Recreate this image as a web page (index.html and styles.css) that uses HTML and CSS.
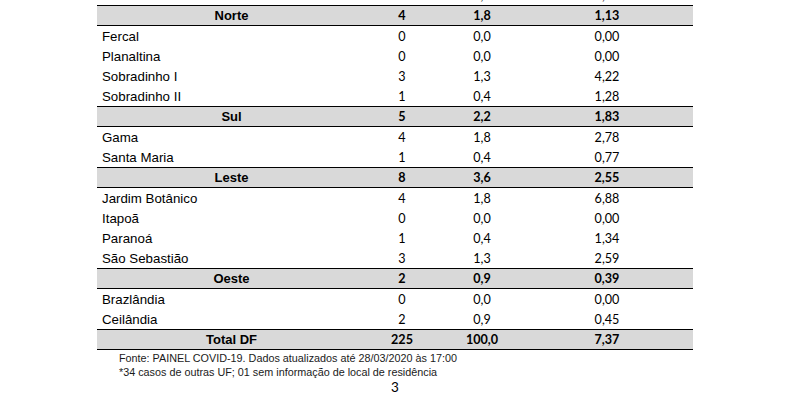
FILE: index.html
```html
<!DOCTYPE html>
<html lang="pt-BR">
<head>
<meta charset="utf-8">
<title>Casos por região</title>
<link rel="stylesheet" href="styles.css">
</head>
<body>
<div class="page">
  <div class="table">
    <div class="row cut"><span class="name"></span><span class="n">2</span><span class="n">0,9</span><span class="n c4">0,90</span></div>
    <div class="row head"><span class="name">Norte</span><span class="n">4</span><span class="n">1,8</span><span class="n c4">1,13</span></div>
    <div class="row"><span class="name">Fercal</span><span class="n">0</span><span class="n">0,0</span><span class="n c4">0,00</span></div>
    <div class="row"><span class="name">Planaltina</span><span class="n">0</span><span class="n">0,0</span><span class="n c4">0,00</span></div>
    <div class="row"><span class="name">Sobradinho I</span><span class="n">3</span><span class="n">1,3</span><span class="n c4">4,22</span></div>
    <div class="row"><span class="name">Sobradinho II</span><span class="n">1</span><span class="n">0,4</span><span class="n c4">1,28</span></div>
    <div class="row head"><span class="name">Sul</span><span class="n">5</span><span class="n">2,2</span><span class="n c4">1,83</span></div>
    <div class="row"><span class="name">Gama</span><span class="n">4</span><span class="n">1,8</span><span class="n c4">2,78</span></div>
    <div class="row"><span class="name">Santa Maria</span><span class="n">1</span><span class="n">0,4</span><span class="n c4">0,77</span></div>
    <div class="row head"><span class="name">Leste</span><span class="n">8</span><span class="n">3,6</span><span class="n c4">2,55</span></div>
    <div class="row"><span class="name">Jardim Botânico</span><span class="n">4</span><span class="n">1,8</span><span class="n c4">6,88</span></div>
    <div class="row"><span class="name">Itapoã</span><span class="n">0</span><span class="n">0,0</span><span class="n c4">0,00</span></div>
    <div class="row"><span class="name">Paranoá</span><span class="n">1</span><span class="n">0,4</span><span class="n c4">1,34</span></div>
    <div class="row"><span class="name">São Sebastião</span><span class="n">3</span><span class="n">1,3</span><span class="n c4">2,59</span></div>
    <div class="row head"><span class="name">Oeste</span><span class="n">2</span><span class="n">0,9</span><span class="n c4">0,39</span></div>
    <div class="row"><span class="name">Brazlândia</span><span class="n">0</span><span class="n">0,0</span><span class="n c4">0,00</span></div>
    <div class="row"><span class="name">Ceilândia</span><span class="n">2</span><span class="n">0,9</span><span class="n c4">0,45</span></div>
    <div class="row head"><span class="name">Total DF</span><span class="n">225</span><span class="n">100,0</span><span class="n c4">7,37</span></div>
  </div>
  <div class="notes">
    <p>Fonte: PAINEL COVID-19. Dados atualizados até 28/03/2020 às 17:00</p>
    <p>*34 casos de outras UF; 01 sem informação de local de residência</p>
  </div>
  <div class="pagenum">3</div>
</div>
</body>
</html>
```
FILE: styles.css
```css
html, body {
  margin: 0;
  padding: 0;
  background: #ffffff;
}
.page {
  width: 792px;
  height: 406px;
  overflow: hidden;
  position: relative;
}
.table {
  margin-left: 97px;
  width: 596px;
  margin-top: -15px;
}
.row {
  display: grid;
  grid-template-columns: 269px 72px 88px 167px;
  align-items: center;
  height: 20px;
  box-sizing: border-box;
  color: #000;
}
.row.head {
  height: 21px;
  background: #d9d9d9;
  border-top: 1.5px solid #000;
  border-bottom: 1.5px solid #000;
}
.name {
  font-family: "Liberation Sans", Arial, sans-serif;
  font-size: 13.3px;
  padding-left: 5px;
  white-space: nowrap;
}
.head .name {
  font-weight: bold;
  text-align: center;
  padding-left: 0;
  font-size: 13px;
}
.n {
  font-family: Lato, "Open Sans", sans-serif;
  font-size: 12.6px;
  text-align: center;
}
.head .n {
  font-weight: bold;
}
.n.c4 {
  padding-right: 5px;
}
.notes {
  margin-left: 119px;
  margin-top: 1px;
  font-family: "Liberation Sans", Arial, sans-serif;
  font-size: 10.8px;
  line-height: 14px;
  color: #1a1a1a;
}
.notes p {
  margin: 0;
  white-space: nowrap;
}
.pagenum {
  margin-top: 0;
  margin-left: 391px;
  font-family: Lato, "Open Sans", sans-serif;
  font-size: 13.5px;
  line-height: 16px;
  color: #000;
}
```
